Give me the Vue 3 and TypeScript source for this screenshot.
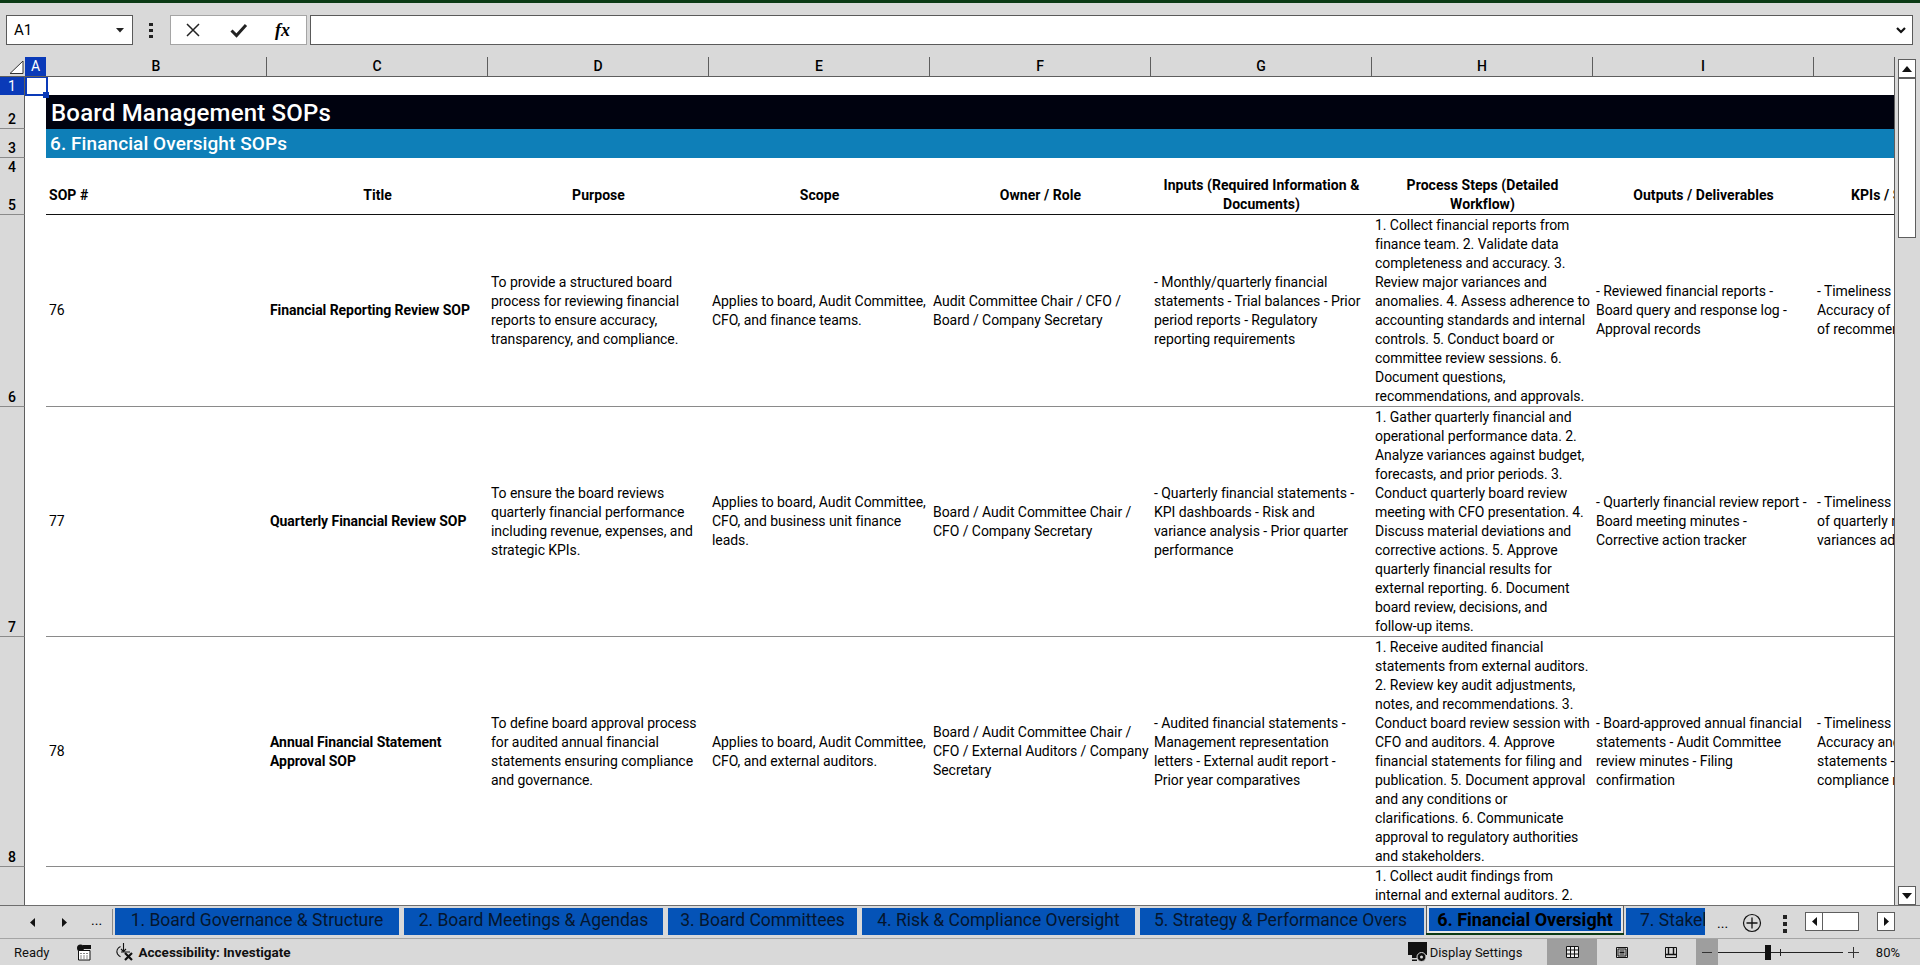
<template>
  <div class="app">
    <div class="topbar"></div>

    <div class="formula-row">
      <div class="name-box">
        <span>A1</span>
        <svg width="8" height="5" viewBox="0 0 8 5"><path d="M0 0h8L4 4.500z" fill="#222" /></svg>
      </div>
      <div class="more-dots"><i></i><i></i><i></i></div>
      <div class="fx-box">
        <svg width="16" height="16" viewBox="0 0 16 16"><path d="M2 2l12 12M14 2L2 14" stroke="#222" stroke-width="1.500" fill="none" /></svg>
        <svg width="18" height="16" viewBox="0 0 18 16"><path d="M1.500 8.500l5 5L16 3" stroke="#222" stroke-width="3" fill="none" /></svg>
        <span class="fx">fx</span>
      </div>
      <div class="formula-input">
        <svg width="10" height="7" viewBox="0 0 10 7"><path d="M1 1l4 4 4-4" stroke="#111" stroke-width="2.200" fill="none" /></svg>
      </div>
    </div>

    <div class="sheet">
      <div class="grid-area">
        <div class="row col-head">
          <div class="corner">
            <svg width="15" height="14" viewBox="0 0 15 14"><path d="M1 13.500L14 1v12.500z" fill="#fff" stroke="#333" /></svg>
          </div>
          <div class="col-a">A</div>
          <div v-for="c in columns" :key="c" class="col-label">{{ c }}</div>
        </div>

        <div class="rows">
          <div class="row r1">
            <div class="row-num active">1</div>
            <div class="selected"><span class="handle"></span></div>
          </div>
          <div class="row r2">
            <div class="row-num">2</div>
            <div class="band title-band">Board Management SOPs</div>
          </div>
          <div class="row r3">
            <div class="row-num">3</div>
            <div class="band sub-band">6. Financial Oversight SOPs</div>
          </div>
          <div class="row r4">
            <div class="row-num">4</div>
          </div>
          <div class="row r5">
            <div class="row-num">5</div>
            <div></div>
            <div class="head-cell left"><span>SOP #</span></div>
            <div v-for="h in headers" :key="h[0]" class="head-cell">
              <span v-for="l in h" :key="l">{{ l }}</span>
            </div>
          </div>

          <div v-for="s in sops" :key="s.rowNo" class="row sop" :style="{ height: s.height + 'px' }">
            <div class="row-num">{{ s.rowNo }}</div>
            <div></div>
            <div class="cell">{{ s.id }}</div>
            <div class="cell bold">
              <span v-for="l in s.title" :key="l">{{ l }}</span>
            </div>
            <div v-for="(col, i) in s.cols" :key="i" class="cell">
              <span v-for="l in col" :key="l">{{ l }}</span>
            </div>
          </div>

          <div class="row last">
            <div class="row-num"></div>
            <div></div>
            <div class="cell top offset-h">
              <span>1. Collect audit findings from</span>
              <span>internal and external auditors. 2.</span>
            </div>
          </div>
        </div>
      </div>

      <div class="vscroll">
        <button class="sb-btn"><svg width="10" height="6" viewBox="0 0 10 6"><path d="M0 6h10L5 0z" fill="#111" /></svg></button>
        <div class="thumb"></div>
        <div class="sb-space"></div>
        <button class="sb-btn"><svg width="10" height="6" viewBox="0 0 10 6"><path d="M0 0h10L5 6z" fill="#111" /></svg></button>
      </div>
    </div>

    <div class="tabbar">
      <div class="tab-nav">
        <svg width="5" height="9" viewBox="0 0 5 9"><path d="M5 0v9L0 4.500z" fill="#111" /></svg>
        <svg width="5" height="9" viewBox="0 0 5 9"><path d="M0 0v9l5-4.500z" fill="#111" /></svg>
        <span class="ell">...</span>
      </div>
      <div class="tabs">
        <div
          v-for="t in tabs"
          :key="t.label"
          class="tab"
          :class="{ current: t.current, clipped: t.clipped }"
          :style="{ width: t.width + 'px' }"
        >
          <span>{{ t.label }}</span>
        </div>
      </div>
      <span class="ell after">...</span>
      <svg class="add" width="20" height="20" viewBox="0 0 20 20">
        <circle cx="10" cy="10" r="8.500" fill="none" stroke="#111" stroke-width="1.200" />
        <path d="M10 4.500v11M4.500 10h11" stroke="#111" stroke-width="1.300" />
      </svg>
      <div class="more-dots tab-dots"><i></i><i></i><i></i></div>
      <div class="hscroll">
        <button class="hb"><svg width="5" height="9" viewBox="0 0 5 9"><path d="M5 0v9L0 4.500z" fill="#111" /></svg></button>
        <div class="h-thumb"></div>
        <div class="h-gap"></div>
        <button class="hb right"><svg width="5" height="9" viewBox="0 0 5 9"><path d="M0 0v9l5-4.500z" fill="#111" /></svg></button>
      </div>
    </div>

    <div class="statusbar">
      <span class="ready">Ready</span>
      <svg class="macro" width="16" height="17" viewBox="0 0 16 17">
        <circle cx="4.500" cy="4" r="3.500" fill="#111" />
        <path d="M7 1h8v4H7z" fill="#111" />
        <path d="M2.500 6.500h11.500v9.500H2.500z" fill="#fff" stroke="#111" />
        <path d="M4.500 9.500h1M7.500 9.500h1M10.500 9.500h1M4.500 12h1M7.500 12h1M10.500 12h1M4.500 14h1M7.500 14h1M10.500 14h1" stroke="#111" />
      </svg>
      <svg class="a11y" width="20" height="18" viewBox="0 0 20 18">
        <path d="M5.500 3.500C2.500 5 1 8 2.500 11c.8 1.300 1.800 2.200 3 2.700" fill="none" stroke="#111" stroke-width="1.200" />
        <path d="M8.500 0v8M6 6l2.500 2.500L11 6M6 9h9" fill="none" stroke="#111" stroke-width="1.100" />
        <path d="M10 10l7 7M17 10l-7 7" stroke="#111" stroke-width="2.200" />
      </svg>
      <span class="a11y-text">Accessibility: Investigate</span>
      <div class="grow"></div>
      <svg class="display" width="20" height="20" viewBox="0 0 20 20">
        <path d="M0 0h19v13H10v3H4v-3H0z" fill="#111" />
        <path d="M4 17.500h5v1.500H4z" fill="#111" />
        <circle cx="13.500" cy="15" r="4.500" fill="#111" stroke="#d9d9d9" />
        <circle cx="13.500" cy="15" r="1.500" fill="#d9d9d9" />
      </svg>
      <span class="display-text">Display Settings</span>
      <div class="view on">
        <svg width="13" height="12" viewBox="0 0 13 12">
          <path d="M0 0h13v12H0z" fill="#eee" />
          <path d="M.5.500h12v11H.5zM.5 4h12M.5 8h12M4.500.5v11M8.500.5v11" fill="none" stroke="#111" />
        </svg>
      </div>
      <div class="view">
        <svg width="12" height="11" viewBox="0 0 12 11">
          <path d="M.5.500h11v10H.5zM2 2h8v7H2z" fill="none" stroke="#111" />
          <path d="M3.500 4h5M3.500 5.500h5M3.500 7h5" stroke="#111" />
        </svg>
      </div>
      <div class="view">
        <svg width="12" height="11" viewBox="0 0 12 11">
          <path d="M.5.500h11v10H.5z" fill="none" stroke="#111" />
          <path d="M1 7.500h10M3.500 1v6.500M8.500 1v6.500" stroke="#111" stroke-width="1.400" />
        </svg>
      </div>
      <div class="minus"></div>
      <div class="slider">
        <div class="tick"></div>
        <div class="knob"></div>
      </div>
      <svg class="plus" width="11" height="11" viewBox="0 0 11 11"><path d="M5.500 0v11M0 5.500h11" stroke="#333" /></svg>
      <span class="pct">80%</span>
    </div>
  </div>
</template>

<script setup lang="ts">
interface Sop {
  rowNo: number
  height: number
  id: string
  title: string[]
  cols: string[][]
}

interface SheetTab {
  label: string
  width: number
  current?: boolean
  clipped?: boolean
}

const columns: string[] = ['B', 'C', 'D', 'E', 'F', 'G', 'H', 'I', 'J']

const headers: string[][] = [
  ['Title'],
  ['Purpose'],
  ['Scope'],
  ['Owner / Role'],
  ['Inputs (Required Information &', 'Documents)'],
  ['Process Steps (Detailed', 'Workflow)'],
  ['Outputs / Deliverables'],
  ['KPIs / Success Metrics'],
]

const sops: Sop[] = [
  {
    rowNo: 6,
    height: 192,
    id: '76',
    title: ['Financial Reporting Review SOP'],
    cols: [
      ['To provide a structured board', 'process for reviewing financial', 'reports to ensure accuracy,', 'transparency, and compliance.'],
      ['Applies to board, Audit Committee,', 'CFO, and finance teams.'],
      ['Audit Committee Chair / CFO /', 'Board / Company Secretary'],
      ['- Monthly/quarterly financial', 'statements - Trial balances - Prior', 'period reports - Regulatory', 'reporting requirements'],
      [
        '1. Collect financial reports from',
        'finance team. 2. Validate data',
        'completeness and accuracy. 3.',
        'Review major variances and',
        'anomalies. 4. Assess adherence to',
        'accounting standards and internal',
        'controls. 5. Conduct board or',
        'committee review sessions. 6.',
        'Document questions,',
        'recommendations, and approvals.',
      ],
      ['- Reviewed financial reports -', 'Board query and response log -', 'Approval records'],
      ['- Timeliness of reports -', 'Accuracy of reporting -', 'of recommendations'],
    ],
  },
  {
    rowNo: 7,
    height: 230,
    id: '77',
    title: ['Quarterly Financial Review SOP'],
    cols: [
      ['To ensure the board reviews', 'quarterly financial performance', 'including revenue, expenses, and', 'strategic KPIs.'],
      ['Applies to board, Audit Committee,', 'CFO, and business unit finance', 'leads.'],
      ['Board / Audit Committee Chair /', 'CFO / Company Secretary'],
      ['- Quarterly financial statements -', 'KPI dashboards - Risk and', 'variance analysis - Prior quarter', 'performance'],
      [
        '1. Gather quarterly financial and',
        'operational performance data. 2.',
        'Analyze variances against budget,',
        'forecasts, and prior periods. 3.',
        'Conduct quarterly board review',
        'meeting with CFO presentation. 4.',
        'Discuss material deviations and',
        'corrective actions. 5. Approve',
        'quarterly financial results for',
        'external reporting. 6. Document',
        'board review, decisions, and',
        'follow-up items.',
      ],
      ['- Quarterly financial review report -', 'Board meeting minutes -', 'Corrective action tracker'],
      ['- Timeliness of review -', 'of quarterly results -', 'variances addressed'],
    ],
  },
  {
    rowNo: 8,
    height: 230,
    id: '78',
    title: ['Annual Financial Statement', 'Approval SOP'],
    cols: [
      ['To define board approval process', 'for audited annual financial', 'statements ensuring compliance', 'and governance.'],
      ['Applies to board, Audit Committee,', 'CFO, and external auditors.'],
      ['Board / Audit Committee Chair /', 'CFO / External Auditors / Company', 'Secretary'],
      ['- Audited financial statements -', 'Management representation', 'letters - External audit report -', 'Prior year comparatives'],
      [
        '1. Receive audited financial',
        'statements from external auditors.',
        '2. Review key audit adjustments,',
        'notes, and recommendations. 3.',
        'Conduct board review session with',
        'CFO and auditors. 4. Approve',
        'financial statements for filing and',
        'publication. 5. Document approval',
        'and any conditions or',
        'clarifications. 6. Communicate',
        'approval to regulatory authorities',
        'and stakeholders.',
      ],
      ['- Board-approved annual financial', 'statements - Audit Committee', 'review minutes - Filing', 'confirmation'],
      ['- Timeliness of approval -', 'Accuracy and completeness of', 'statements - Audit', 'compliance rate'],
    ],
  },
]

const tabs: SheetTab[] = [
  { label: '1. Board Governance & Structure', width: 284 },
  { label: '2. Board Meetings & Agendas', width: 259 },
  { label: '3. Board Committees', width: 189 },
  { label: '4. Risk & Compliance Oversight', width: 273 },
  { label: '5. Strategy & Performance Overs', width: 284, clipped: true },
  { label: '6. Financial Oversight', width: 192, current: true },
  { label: '7. Stakeholder Relations', width: 79, clipped: true },
]
</script>

<style scoped>
.app {
  --xl: "Roboto", "Liberation Sans", sans-serif;
  width: 1920px;
  height: 965px;
  display: flex;
  flex-direction: column;
  overflow: hidden;
  background: #d9d9d9;
  color: #000;
  font-family: var(--xl);
}
.topbar {
  height: 3px;
  background: #0b3a15;
}

/* formula bar */
.formula-row {
  height: 54px;
  display: flex;
  align-items: flex-start;
  padding: 12px 7px 0 6px;
  box-sizing: border-box;
}
.name-box {
  width: 127px;
  height: 30px;
  box-sizing: border-box;
  background: #fff;
  border: 1px solid #5a5a5a;
  display: flex;
  align-items: center;
  justify-content: space-between;
  padding: 0 8px 0 7px;
  font-size: 15px;
}
.more-dots {
  display: flex;
  flex-direction: column;
  gap: 3px;
  width: 4px;
  margin: 8px 17px 0 16px;
}
.more-dots i {
  width: 4px;
  height: 3px;
  background: #222;
}
.fx-box {
  width: 137px;
  height: 30px;
  box-sizing: border-box;
  background: #fff;
  border: 1px solid #a5a5a5;
  display: flex;
  align-items: center;
  gap: 29px;
  padding-left: 14px;
  margin-right: 3px;
}
.fx {
  font-family: "Liberation Serif", serif;
  font-style: italic;
  font-weight: 700;
  font-size: 18px;
  margin-left: -2px;
}
.formula-input {
  flex: 1;
  height: 30px;
  box-sizing: border-box;
  background: #fff;
  border: 1px solid #5a5a5a;
  display: flex;
  align-items: center;
  justify-content: flex-end;
  padding-right: 6px;
}

/* sheet */
.sheet {
  height: 849px;
  display: flex;
}
.grid-area {
  width: 1895px;
  box-sizing: border-box;
  border-right: 1px solid #5e5e5e;
  display: flex;
  flex-direction: column;
  overflow: hidden;
}
.row {
  display: grid;
  grid-template-columns: 25px 21px repeat(9, 221px);
  width: 2035px;
  position: relative;
}
.col-head {
  height: 20px;
  border-bottom: 1px solid #5e5e5e;
  box-sizing: border-box;
  font-size: 14px;
  line-height: 19px;
}
.corner {
  display: flex;
  align-items: flex-end;
  justify-content: flex-end;
  padding: 0 1px 2px 0;
}
.col-a {
  background: #0a3ab8;
  color: #fff;
  text-align: center;
}
.col-label {
  text-align: center;
  border-right: 1px solid #5e5e5e;
  box-sizing: border-box;
  font-weight: 500;
}
.rows {
  flex: 1;
  overflow: hidden;
  background: #fff;
}
.row-num {
  background: #d9d9d9;
  border-right: 1px solid #5e5e5e;
  border-bottom: 1px solid #8a8a8a;
  box-sizing: border-box;
  display: flex;
  align-items: flex-end;
  justify-content: center;
  font-size: 14px;
  font-weight: 500;
  line-height: 18px;
}
.row-num.active {
  background: #0a3ab8;
  color: #fff;
  font-weight: 400;
  border-bottom: none;
}
.r1 { height: 18px; }
.r2 { height: 34px; }
.r3 { height: 29px; }
.r4 { height: 18px; }
.r5 { height: 39px; }
.selected {
  position: absolute;
  left: 25px;
  top: -1px;
  width: 23px;
  height: 20px;
  box-sizing: border-box;
  border: 2px solid #0a3ab8;
  z-index: 2;
}
.handle {
  position: absolute;
  right: -3px;
  bottom: -4px;
  width: 6px;
  height: 6px;
  background: #0a3ab8;
}
.band {
  grid-column: 3 / -1;
  color: #fff;
  display: flex;
  align-items: center;
  white-space: nowrap;
}
.title-band {
  background: #00020f;
  font-size: 24px;
  font-weight: 500;
  letter-spacing: 0.2px;
  padding: 2px 0 0 5px;
  box-sizing: border-box;
}
.sub-band {
  background: #0e7fb8;
  font-size: 19px;
  font-weight: 500;
  letter-spacing: 0.08px;
  padding-left: 4px;
}
.head-cell {
  display: flex;
  flex-direction: column;
  align-items: center;
  justify-content: center;
  font-size: 14px;
  font-weight: 700;
  letter-spacing: 0.05px;
  line-height: 19px;
  white-space: nowrap;
  border-bottom: 1px solid #111;
  box-sizing: border-box;
}
.head-cell.left {
  align-items: flex-start;
  padding-left: 3px;
}
.cell {
  display: flex;
  flex-direction: column;
  justify-content: center;
  padding-left: 3px;
  font-size: 14px;
  letter-spacing: -0.06px;
  line-height: 19px;
  white-space: nowrap;
  overflow: hidden;
  border-bottom: 1px solid #8a8a8a;
  box-sizing: border-box;
}
.cell.bold {
  font-weight: 700;
  letter-spacing: -0.06px;
}
.cell.top {
  justify-content: flex-start;
  border-bottom: none;
}
.offset-h {
  grid-column: 9;
  grid-row: 1;
}
.last {
  height: 230px;
}

/* vertical scrollbar */
.vscroll {
  width: 25px;
  box-sizing: border-box;
  padding: 2px 4px 1px 3px;
  display: flex;
  flex-direction: column;
}
.sb-btn {
  height: 19px;
  padding: 0;
  flex: none;
  background: #fff;
  border: 1px solid #5e5e5e;
  display: flex;
  align-items: center;
  justify-content: center;
}
.thumb {
  height: 160px;
  box-sizing: border-box;
  background: #fff;
  border: 1px solid #5e5e5e;
}
.sb-space {
  flex: 1;
}

/* sheet tabs */
.tabbar {
  height: 34px;
  box-sizing: border-box;
  border-top: 1px solid #6e6e6e;
  border-bottom: 1px solid #a5a5a5;
  display: flex;
  align-items: flex-start;
  margin-top: -1px;
  position: relative;
}
.tab-nav {
  width: 113px;
  height: 26px;
  margin-top: 3px;
  box-sizing: border-box;
  border-right: 1px solid #8a8a8a;
  display: flex;
  align-items: center;
  padding-left: 30px;
  gap: 27px;
}
.ell {
  font-size: 14px;
  line-height: 14px;
  margin: -4px 0 0 -3px;
}
.tabs {
  display: flex;
  gap: 5px;
  margin-left: 2px;
  padding-top: 2px;
}
.tab {
  height: 27px;
  flex: none;
  background: #0553b7;
  display: flex;
  align-items: center;
  justify-content: center;
  overflow: hidden;
  white-space: nowrap;
  font-size: 17.500px;
  color: #05162e;
  padding-bottom: 3px;
  box-sizing: border-box;
}
.tab.clipped {
  justify-content: flex-start;
  padding-left: 14px;
}
.tab.current {
  height: 23px;
  padding-bottom: 1px;
  font-size: 18px;
  font-weight: 700;
  color: #000;
  position: relative;
  overflow: visible;
  box-shadow: 0 0 0 2px #e8e8e8, 0 0 0 3px #5e5e5e;
}
.tab.current::after {
  content: "";
  position: absolute;
  left: -3px;
  right: -3px;
  bottom: -4px;
  height: 2px;
  background: #0b3a15;
}
.ell.after {
  margin: 10px 0 0 12px;
}
.add {
  margin: 7px 0 0 14px;
}
.tab-dots {
  margin: 9px 18px 0 21px;
  gap: 3px;
}
.tab-dots i {
  height: 4px;
}
.hscroll {
  display: flex;
  margin-top: 6px;
}
.hb {
  width: 18px;
  height: 19px;
  padding: 0;
  background: #fff;
  border: 1px solid #5e5e5e;
  display: flex;
  align-items: center;
  justify-content: center;
}
.h-thumb {
  width: 36px;
  height: 19px;
  box-sizing: border-box;
  background: #fff;
  border: 1px solid #5e5e5e;
  border-left: none;
}
.h-gap {
  width: 18px;
}

/* status bar */
.statusbar {
  flex: 1;
  display: flex;
  align-items: center;
  font-size: 13px;
  padding-left: 14px;
  color: #111;
}
.macro {
  margin-left: 27px;
}
.a11y {
  margin-left: 23px;
}
.a11y-text {
  font-weight: 700;
  font-size: 13.500px;
  margin-left: 3px;
}
.grow {
  flex: 1;
}
.display-text {
  margin: 0 25px 0 2px;
}
.view {
  width: 49.500px;
  height: 100%;
  display: flex;
  align-items: center;
  justify-content: center;
}
.view.on {
  background: #9e9e9e;
}
.minus {
  width: 22px;
  height: 100%;
  background: #9e9e9e;
  position: relative;
}
.minus::after {
  content: "";
  position: absolute;
  left: 6px;
  right: 6px;
  top: 50%;
  height: 1px;
  background: #333;
}
.slider {
  width: 125px;
  height: 1px;
  background: #222;
  position: relative;
}
.tick {
  position: absolute;
  left: 62px;
  top: -3px;
  width: 1px;
  height: 7px;
  background: #222;
}
.knob {
  position: absolute;
  left: 47px;
  top: -7px;
  width: 6px;
  height: 15px;
  background: #111;
}
.plus {
  margin-left: 5px;
}
.pct {
  margin: 0 20px 0 17px;
}
</style>

<style>
html, body {
  margin: 0;
  background: #d9d9d9;
}
</style>
